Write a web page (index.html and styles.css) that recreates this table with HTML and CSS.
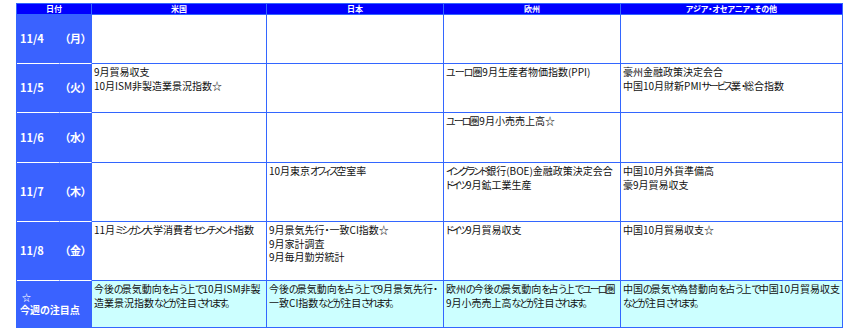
FILE: index.html
```html
<!DOCTYPE html>
<html lang="ja">
<head>
<meta charset="utf-8">
<title>週間経済指標</title>
<link rel="stylesheet" href="styles.css">
</head>
<body>
<table class="cal">
  <colgroup>
    <col class="c-num"><col class="c-wd"><col class="c-us"><col class="c-jp"><col class="c-eu"><col class="c-as">
  </colgroup>
  <thead>
    <tr class="r-head">
      <th colspan="2">日付</th>
      <th>米国</th>
      <th>日本</th>
      <th>欧州</th>
      <th>アジア・オセアニア・その他</th>
    </tr>
  </thead>
  <tbody>
    <tr class="r-49">
      <td class="d-num">11/4</td><td class="d-wd">（月）</td>
      <td></td><td></td><td></td><td></td>
    </tr>
    <tr class="r-49">
      <td class="d-num">11/5</td><td class="d-wd">（火）</td>
      <td>9月貿易収支<br>10月ISM非製造業景況指数☆</td>
      <td></td>
      <td><span class="k1">ユーロ</span>圏9月生産者物価指数(PPI)</td>
      <td>豪州金融政策決定会合<br>中国10月財新PMI<span class="k">サービス</span>業<span class="k">・</span>総合指数</td>
    </tr>
    <tr class="r-50">
      <td class="d-num">11/6</td><td class="d-wd">（水）</td>
      <td></td><td></td>
      <td><span class="k">ユーロ</span>圏9月小売売上高☆</td>
      <td></td>
    </tr>
    <tr class="r-59">
      <td class="d-num">11/7</td><td class="d-wd">（木）</td>
      <td></td>
      <td>10月東京<span class="k">オフィス</span>空室率</td>
      <td><span class="k">イングランド</span>銀行(BOE)金融政策決定会合<br><span class="k">ドイツ</span>9月鉱工業生産</td>
      <td>中国10月外貨準備高<br>豪9月貿易収支</td>
    </tr>
    <tr class="r-59">
      <td class="d-num">11/8</td><td class="d-wd">（金）</td>
      <td>11月<span class="k">ミシガン</span>大学消費者<span class="k">センチメント</span>指数</td>
      <td>9月景気先行・一致CI指数☆<br>9月家計調査<br>9月毎月勤労統計</td>
      <td><span class="k">ドイツ</span>9月貿易収支</td>
      <td>中国10月貿易収支☆</td>
    </tr>
    <tr class="r-47 r-note">
      <td class="d-note" colspan="2"><span class="note-star">☆</span><span class="note-label">今週の注目点</span></td>
      <td>今後<span class="k">の</span>景気動向<span class="k">を</span>占<span class="k">う</span>上<span class="k">で</span>10月ISM非製<br>造業景況指数<span class="k">などが</span>注目<span class="k">されます。</span></td>
      <td>今後<span class="k">の</span>景気動向<span class="k">を</span>占<span class="k">う</span>上<span class="k">で</span>9月景気先行・<br>一致CI指数<span class="k">などが</span>注目<span class="k">されます。</span></td>
      <td>欧州<span class="k">の</span>今後<span class="k">の</span>景気動向<span class="k">を</span>占<span class="k">う</span>上<span class="k">で</span><span class="k">ユーロ</span>圏<br>9月小売売上高<span class="k">などが</span>注目<span class="k">されます。</span></td>
      <td>中国<span class="k">の</span>景気<span class="k">や</span>為替動向<span class="k">を</span>占<span class="k">う</span>上<span class="k">で</span>中国10月貿易収支<br><span class="k">などが</span>注目<span class="k">されます。</span></td>
    </tr>
  </tbody>
</table>
</body>
</html>
```
FILE: styles.css
```css
html, body {
  margin: 0;
  padding: 0;
  background: #ffffff;
}

body {
  font-family: "Noto Sans CJK JP", "Noto Sans", sans-serif;
  font-feature-settings: "palt" 1;
  color: #111111;
}

.cal {
  box-sizing: border-box;
  width: 827px;
  margin: 3px 0 0 16px;
  table-layout: fixed;
  border-collapse: separate;
  border-spacing: 0;
  border-top: 1px solid #3366ff;
  border-left: 1px solid #3366ff;
}

.c-num { width: 43px; }
.c-wd { width: 32px; }
.c-us { width: 175px; }
.c-jp { width: 177px; }
.c-eu { width: 177px; }
.c-as { width: 222px; }

.cal th,
.cal td {
  box-sizing: border-box;
  border-right: 1px solid #3366ff;
  border-bottom: 1px solid #3366ff;
  padding: 1px 2px 0 2px;
  overflow: hidden;
}

.cal th {
  background: #0000ff;
  color: #ffffff;
  font-size: 8px;
  line-height: 10px;
  font-weight: bold;
  text-align: center;
  vertical-align: middle;
  padding: 0;
}

.cal td {
  font-size: 10px;
  line-height: 13.6px;
  vertical-align: top;
  text-align: left;
  white-space: nowrap;
}

.k {
  letter-spacing: -2px;
}

.k1 {
  letter-spacing: -1px;
}

.r-head { height: 11px; }
.r-49 { height: 49px; }
.r-50 { height: 50px; }
.r-59 { height: 59px; }
.r-47 { height: 47px; }

.cal td.d-num,
.cal td.d-wd,
.cal td.d-note {
  background: #3a62ff;
  color: #ffffff;
  font-weight: bold;
  vertical-align: middle;
  border-bottom-color: #ffffff;
}

.cal td.d-num {
  font-size: 11px;
  padding: 0 0 0 3px;
  border-right-color: #3a62ff;
}

.cal td.d-wd {
  font-size: 11px;
  padding: 0;
  text-align: center;
}

.cal td.d-note {
  font-size: 10px;
  line-height: 12px;
  padding: 0 0 0 3px;
  border-bottom-color: #3366ff;
}

.note-star,
.note-label {
  display: block;
  height: 12px;
  line-height: 12px;
}

.note-star {
  font-size: 9px;
  padding-left: 2px;
}

.r-note td {
  background: #ccffff;
}
```
